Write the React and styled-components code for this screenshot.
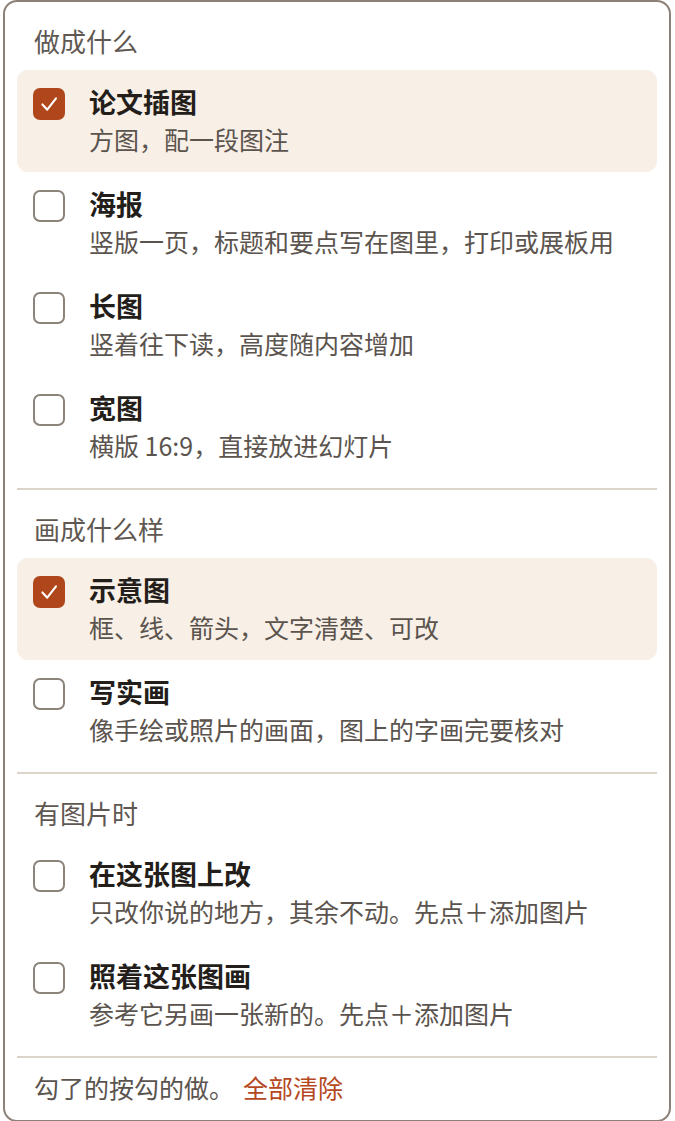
import * as React from 'react';
import styled, { createGlobalStyle } from 'styled-components';


const GlobalStyle = createGlobalStyle`
  html, body {
    margin: 0;
    padding: 0;
    background: #ffffff;
  }
  body {
    font-family: "Noto Sans CJK SC", "Noto Sans", sans-serif;
  }
  * {
    box-sizing: border-box;
  }
`;

const Page = styled.div`
  width: 675px;
  height: 1121px;
  padding-left: 3px;
  overflow: hidden;
`;

const Panel = styled.div`
  width: 668px;
  background: #ffffff;
  border: 2px solid #8b8178;
  border-radius: 14px;
  padding: 0 12px;
`;

const Section = styled.div`
  padding: 21px 0 10px;
`;

const SectionLabel = styled.div`
  padding-left: 17px;
  margin-bottom: 11px;
  font-size: 26px;
  line-height: 36px;
  color: #5f5852;
`;

const Divider = styled.div`
  height: 2px;
  background: #dcd3ca;
`;

const Row = styled.label`
  display: flex;
  align-items: flex-start;
  gap: 24px;
  height: 102px;
  padding: 14px 16px 0;
  border-radius: 11px;
  background: ${ (p) => (p.checked ? '#f8efe6' : 'transparent') };
  cursor: pointer;
`;

const Box = styled.span`
  flex: none;
  display: flex;
  align-items: center;
  justify-content: center;
  width: 32px;
  height: 32px;
  margin-top: 4px;
  border-radius: 7px;
  border: 2px solid ${ (p) => (p.checked ? '#b0461c' : '#8c837b') };
  background: ${ (p) => (p.checked ? '#b0461c' : '#ffffff') };
`;

const Texts = styled.div`
  display: flex;
  flex-direction: column;
`;

const Title = styled.div`
  font-size: 27px;
  font-weight: 600;
  line-height: 36px;
  color: #231e1a;
`;

const Sub = styled.div`
  font-size: 25px;
  line-height: 38px;
  color: #5b544e;
`;

const Footer = styled.div`
  display: flex;
  align-items: center;
  padding: 11px 0 15px 17px;
  font-size: 25px;
  line-height: 36px;
  color: #5b544e;
`;

const ClearButton = styled.button`
  margin-left: 9px;
  padding: 0;
  border: 0;
  background: none;
  font: inherit;
  color: #b5481e;
  cursor: pointer;
`;


const sections = [
  {
    label: '做成什么',
    items: [
      { id: 'paper', title: '论文插图', sub: '方图，配一段图注' },
      { id: 'poster', title: '海报', sub: '竖版一页，标题和要点写在图里，打印或展板用' },
      { id: 'long', title: '长图', sub: '竖着往下读，高度随内容增加' },
      { id: 'wide', title: '宽图', sub: '横版 16:9，直接放进幻灯片' },
    ],
  },
  {
    label: '画成什么样',
    items: [
      { id: 'diagram', title: '示意图', sub: '框、线、箭头，文字清楚、可改' },
      { id: 'real', title: '写实画', sub: '像手绘或照片的画面，图上的字画完要核对' },
    ],
  },
  {
    label: '有图片时',
    items: [
      { id: 'edit', title: '在这张图上改', sub: '只改你说的地方，其余不动。先点＋添加图片' },
      { id: 'ref', title: '照着这张图画', sub: '参考它另画一张新的。先点＋添加图片' },
    ],
  },
];

const Check = () => (
  <svg width="32" height="32" viewBox="0 0 32 32" fill="none">
    <path d="M8.5 16.5 L14 22.5 L24 9.5" stroke="#ffffff" strokeWidth="2.4" strokeLinecap="round" strokeLinejoin="round" />
  </svg>
);


export default function App() {
  const [checked, setChecked] = React.useState({ paper: true, diagram: true });

  const toggle = (id) => setChecked((prev) => ({ ...prev, [id]: !prev[id] }));

  return (
    <Page>
      <GlobalStyle />
      <Panel>
        { sections.map((section, i) => (
          <React.Fragment key={ section.label }>
            { i > 0 && <Divider /> }
            <Section>
              <SectionLabel>{ section.label }</SectionLabel>
              { section.items.map((item) => (
                <Row key={ item.id } checked={ !!checked[item.id] } onClick={ () => toggle(item.id) }>
                  <Box checked={ !!checked[item.id] }>{ checked[item.id] && <Check /> }</Box>
                  <Texts>
                    <Title>{ item.title }</Title>
                    <Sub>{ item.sub }</Sub>
                  </Texts>
                </Row>
              )) }
            </Section>
          </React.Fragment>
        )) }
        <Divider />
        <Footer>
          勾了的按勾的做。
          <ClearButton onClick={ () => setChecked({}) }>全部清除</ClearButton>
        </Footer>
      </Panel>
    </Page>
  );
}
